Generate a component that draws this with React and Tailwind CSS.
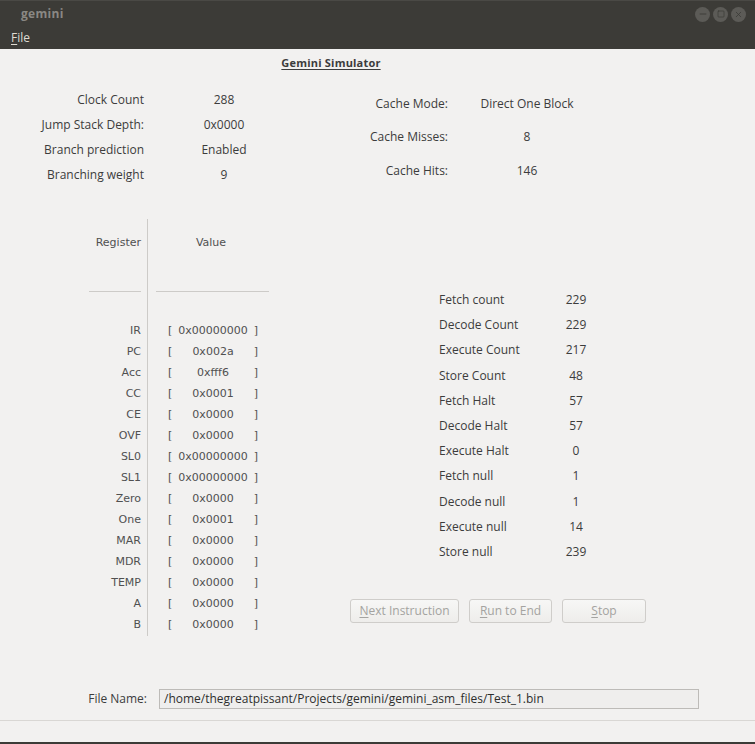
import { Minus, Square, X } from "lucide-react";

const stats = [
  ["Clock Count", "288"],
  ["Jump Stack Depth:", "0x0000"],
  ["Branch prediction", "Enabled"],
  ["Branching weight", "9"],
];

const cache = [
  ["Cache Mode:", "Direct One Block"],
  ["Cache Misses:", "8"],
  ["Cache Hits:", "146"],
];

const registers = [
  ["IR", "0x00000000"],
  ["PC", "0x002a"],
  ["Acc", "0xfff6"],
  ["CC", "0x0001"],
  ["CE", "0x0000"],
  ["OVF", "0x0000"],
  ["SL0", "0x00000000"],
  ["SL1", "0x00000000"],
  ["Zero", "0x0000"],
  ["One", "0x0001"],
  ["MAR", "0x0000"],
  ["MDR", "0x0000"],
  ["TEMP", "0x0000"],
  ["A", "0x0000"],
  ["B", "0x0000"],
];

const pipeline = [
  ["Fetch count", "229"],
  ["Decode Count", "229"],
  ["Execute Count", "217"],
  ["Store Count", "48"],
  ["Fetch Halt", "57"],
  ["Decode Halt", "57"],
  ["Execute Halt", "0"],
  ["Fetch null", "1"],
  ["Decode null", "1"],
  ["Execute null", "14"],
  ["Store null", "239"],
];

const ui = { fontFamily: '"Open Sans", "Noto Sans", sans-serif' };
const mono = { fontFamily: '"DejaVu Sans", sans-serif' };

const WinButton = ({ children }) => (
  <div className="w-[15px] h-[15px] rounded-full bg-[#5c5b57] flex items-center justify-center text-[#3a3935]">
    {children}
  </div>
);

const DisabledButton = ({ hot, rest, width }) => (
  <button
    disabled
    className={`${width} h-[24px] rounded-[3px] border border-[#cfcdca] bg-gradient-to-b from-[#f7f7f6] to-[#eeedeb] text-[12px] text-[#a4a3a0]`}
    style={ui}
  >
    <span className="underline underline-offset-2">{hot}</span>
    {rest}
  </button>
);

export default function App() {
  return (
    <div className="w-[755px] h-[744px] flex flex-col bg-[#3c3b37] overflow-hidden">
      {/* Title bar */}
      <div className="h-[27px] flex items-center justify-between pl-[21px] pr-[9px] border-t border-[#4a4945]">
        <span className="text-[12px] font-bold text-[#8a8884] tracking-wide" style={ui}>
          gemini
        </span>
        <div className="flex gap-[3px]">
          <WinButton>
            <Minus size={10} strokeWidth={2} />
          </WinButton>
          <WinButton>
            <Square size={8} strokeWidth={2} />
          </WinButton>
          <WinButton>
            <X size={9} strokeWidth={2} />
          </WinButton>
        </div>
      </div>

      {/* Menu bar */}
      <div className="h-[22px] flex items-center pl-[11px]">
        <span className="text-[12px] text-[#dfdbd2]" style={ui}>
          <span className="underline underline-offset-2">F</span>ile
        </span>
      </div>

      {/* Content */}
      <div className="flex-1 bg-[#f2f1f0] flex flex-col text-[#3c3c3c]" style={ui}>
        <div className="pt-0 text-center pr-[93px]">
          <span className="text-[11px] font-bold underline underline-offset-2 tracking-[0.2px]">
            Gemini Simulator
          </span>
        </div>

        {/* Top stats */}
        <div className="flex mt-[14px]">
          <div className="grid grid-cols-[144px_80px] gap-x-[40px] text-[12px]">
            {stats.map(([k, v]) => (
              <div key={k} className="contents">
                <div className="h-[25px] flex items-center justify-end">{k}</div>
                <div className="h-[25px] flex items-center justify-center">{v}</div>
              </div>
            ))}
          </div>
          <div className="ml-[64px] grid grid-cols-[120px_98px] gap-x-[30px] text-[12px]">
            {cache.map(([k, v]) => (
              <div key={k} className="contents">
                <div className="h-[33.5px] flex items-center justify-end">{k}</div>
                <div className="h-[33.5px] flex items-center justify-center">{v}</div>
              </div>
            ))}
          </div>
        </div>

        {/* Registers + pipeline */}
        <div className="flex mt-[31px]">
          <div className="flex text-[11px] text-[#505050]" style={mono}>
            <div className="w-[148px] pl-[89px] pr-[6px] flex flex-col border-r border-[#cdcbc8]">
              <div className="h-[72px] pt-[16px] text-right">Register</div>
              <div className="h-px bg-[#cdcbc8]" />
              <div className="mt-[29px] flex flex-col">
                {registers.map(([k]) => (
                  <div key={k} className="h-[21px] flex items-center justify-end">
                    {k}
                  </div>
                ))}
              </div>
            </div>
            <div className="w-[113px] ml-[8px] flex flex-col">
              <div className="h-[72px] pt-[16px] text-center pr-[3px]">Value</div>
              <div className="h-px bg-[#cdcbc8]" />
              <div className="mt-[29px] flex flex-col">
                {registers.map(([k, v]) => (
                  <div key={k} className="h-[21px] ml-[12px] w-[90px] flex items-center">
                    <span>[</span>
                    <span className="flex-1 text-center">{v}</span>
                    <span>]</span>
                  </div>
                ))}
              </div>
            </div>
          </div>

          <div className="ml-[81px] flex flex-col">
            <div className="mt-[69px] ml-[89px] grid grid-cols-[110px_54px] text-[12px]">
              {pipeline.map(([k, v]) => (
                <div key={k} className="contents">
                  <div className="h-[25.2px] flex items-center">{k}</div>
                  <div className="h-[25.2px] flex items-center justify-center">{v}</div>
                </div>
              ))}
            </div>
            <div className="mt-[34px] flex gap-[10px]">
              <DisabledButton hot="N" rest="ext Instruction" width="w-[109px]" />
              <DisabledButton hot="R" rest="un to End" width="w-[83px]" />
              <DisabledButton hot="S" rest="top" width="w-[84px]" />
            </div>
          </div>
        </div>

        {/* File name */}
        <div className="mt-auto mb-[11px] flex items-center">
          <div className="w-[147px] text-right text-[12px] pr-0">File Name:</div>
          <div className="ml-[12px] w-[540px] h-[20px] border border-[#bdbbb8] bg-[#efeeed] flex items-center pl-[4px] text-[12px] text-[#2e2e2e]">
            /home/thegreatpissant/Projects/gemini/gemini_asm_files/Test_1.bin
          </div>
        </div>
      </div>

      {/* Status bar */}
      <div className="h-[22px] bg-[#f2f1f0] border-t border-[#d9d7d4]" />
      <div className="h-[2px] bg-[#3c3b37]" />
    </div>
  );
}
